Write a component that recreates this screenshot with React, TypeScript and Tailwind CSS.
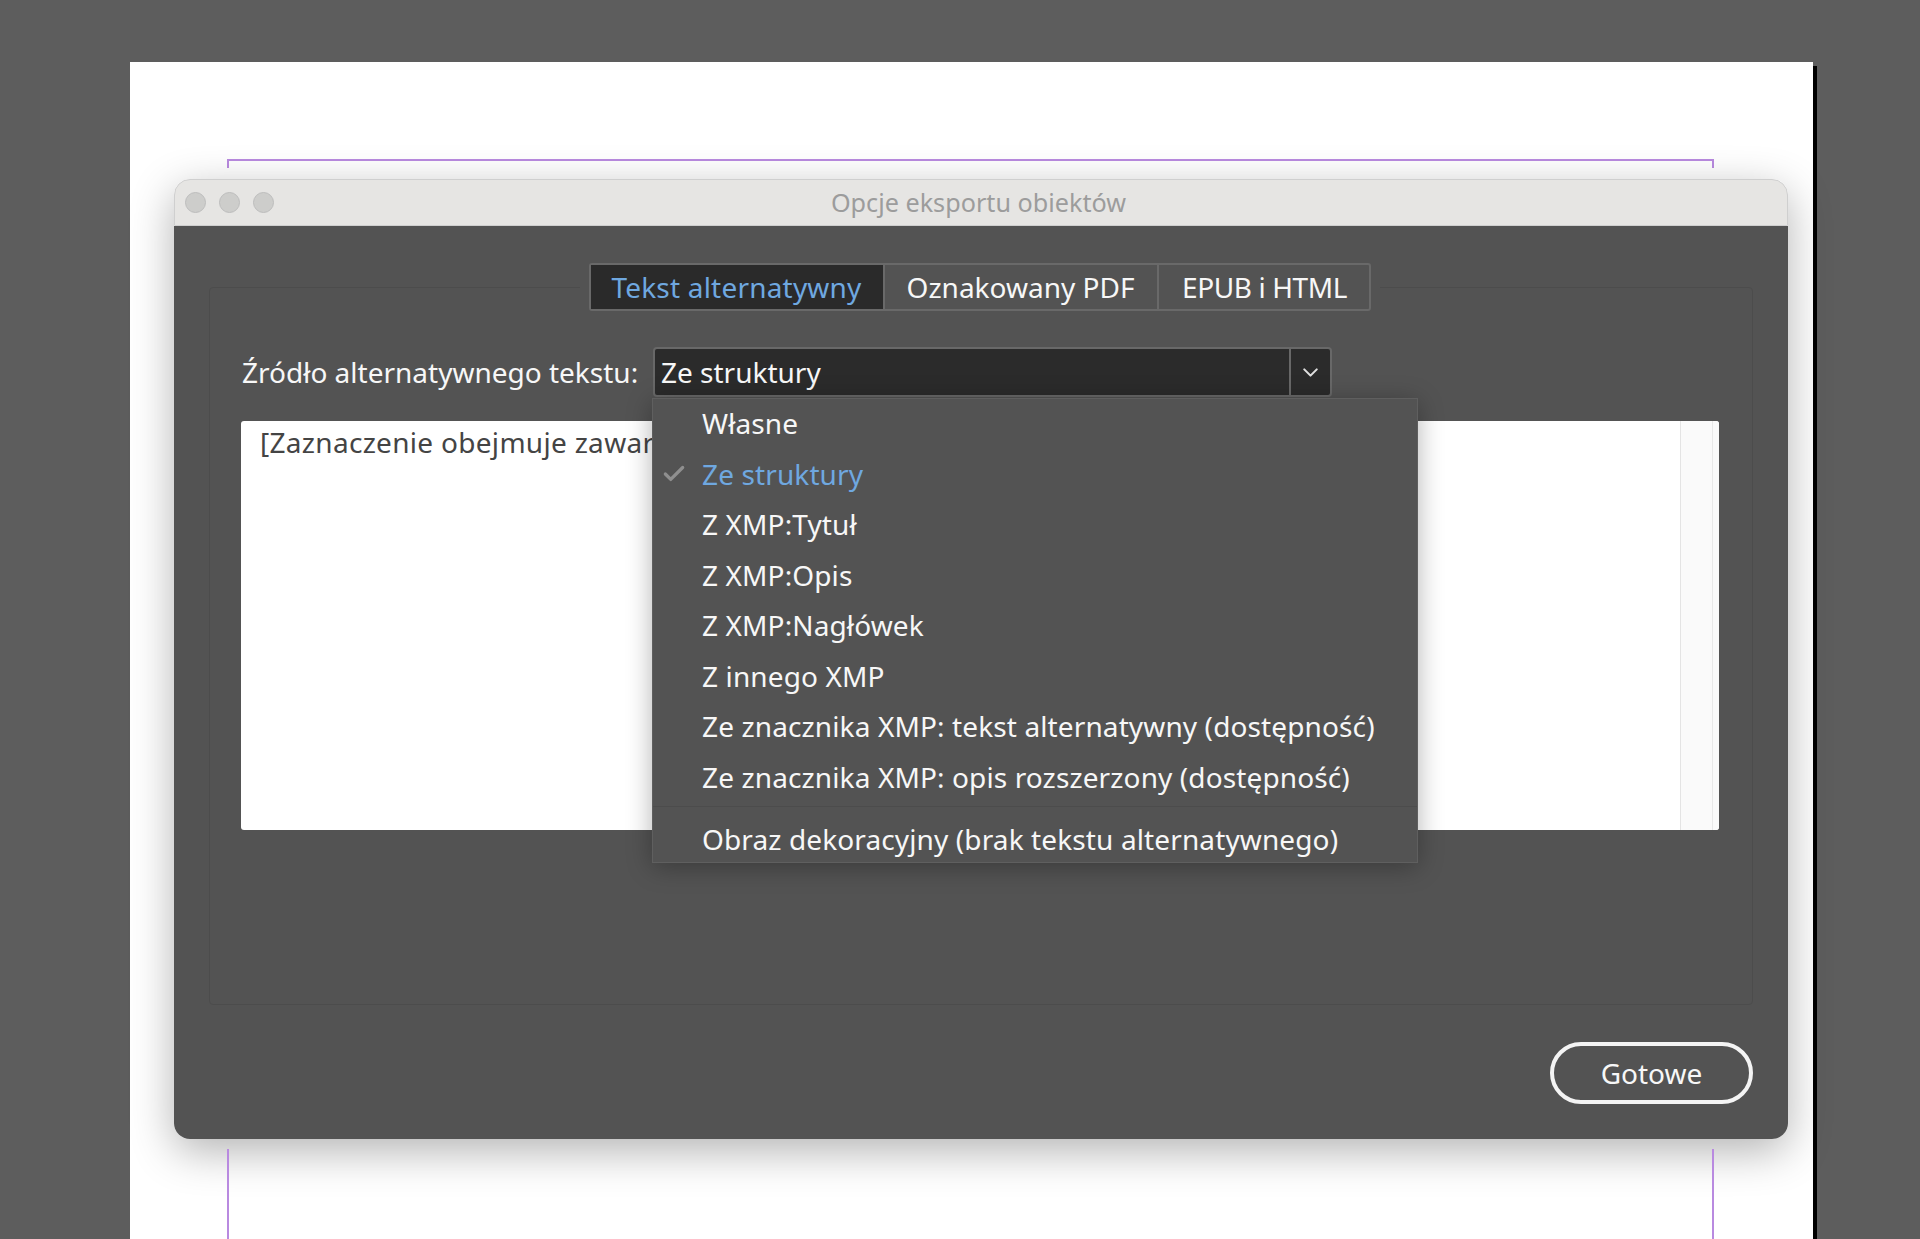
import { Check, ChevronDown } from "lucide-react";

const MENU_ITEMS = [
  "Własne",
  "Ze struktury",
  "Z XMP:Tytuł",
  "Z XMP:Opis",
  "Z XMP:Nagłówek",
  "Z innego XMP",
  "Ze znacznika XMP: tekst alternatywny (dostępność)",
  "Ze znacznika XMP: opis rozszerzony (dostępność)",
];

export default function App() {
  return (
    <div className="flex h-[1239px] overflow-hidden bg-[#5d5d5d] pt-[62px] pl-[130px] font-['Noto_Sans',sans-serif] text-[28px] text-[#f7f7f7]">
      {/* Document page */}
      <div className="flex w-[1683px] flex-col bg-white pt-[97px]">
        <div className="ml-[97px] h-[9px] w-[1487px] border-x-2 border-t-2 border-[#b98ae0]" />

        {/* Dialog */}
        <div className="mt-[11px] ml-[44px] flex h-[960px] w-[1614px] flex-col rounded-[16px] shadow-[0_12px_44px_rgba(0,0,0,0.3)]">
          <div className="flex h-[47px] items-center rounded-t-[16px] border-x border-t border-b border-[#cfcfcf] bg-[#e6e5e3] pl-[10px]">
            <div className="flex gap-[13px]">
              <span className="h-[21px] w-[21px] rounded-full border border-[#bdbdbd] bg-[#cdcdcb]" />
              <span className="h-[21px] w-[21px] rounded-full border border-[#bdbdbd] bg-[#cdcdcb]" />
              <span className="h-[21px] w-[21px] rounded-full border border-[#bdbdbd] bg-[#cdcdcb]" />
            </div>
            <span className="flex-1 pr-[104px] text-center text-[25.2px] text-[#9c9c9c]">Opcje eksportu obiektów</span>
          </div>

          <div className="flex flex-1 flex-col rounded-b-[16px] bg-[#535353]">
            <div className="mt-[61px] ml-[35px] flex h-[718px] w-[1544px] flex-col rounded-[4px] border border-[#4c4c4c] pl-[31px]">
              {/* Tabs */}
              <div className="-mt-[25px] mr-[34px] flex self-center bg-[#535353] px-[9px]">
                <div className="flex h-[48px] items-center rounded-[3px] border-2 border-[#696969]">
                  <span className="flex h-full w-[292px] items-center justify-center bg-[#2a2a2a] tracking-[0.2px] text-[#6fa8e0]">Tekst alternatywny</span>
                  <span className="flex h-full w-[274px] items-center justify-center border-l-2 border-[#696969]">Oznakowany PDF</span>
                  <span className="flex h-full w-[212px] items-center justify-center border-l-2 border-[#696969] pl-[2px] tracking-[-0.4px]">EPUB i HTML</span>
                </div>
              </div>

              {/* Source select */}
              <div className="mt-[36px] flex">
                <span className="flex h-[50px] w-[412px] items-center pl-[1px]">Źródło alternatywnego tekstu:</span>
                <div className="relative">
                  <div className="flex h-[50px] w-[679px] rounded-[4px] border-2 border-[#686868] bg-[#2b2b2b]">
                    <span className="flex flex-1 items-center pl-[6px]">Ze struktury</span>
                    <span className="flex w-[41px] items-center justify-center border-l-2 border-[#686868]">
                      <ChevronDown size={25} strokeWidth={2} className="text-[#e0e0e0]" />
                    </span>
                  </div>

                  {/* Open menu */}
                  <div className="absolute top-[51px] -left-[1px] z-10 w-[766px] border border-[#5f5f5f] bg-[#535353] shadow-[0_4px_24px_rgba(0,0,0,0.3)]">
                    {MENU_ITEMS.map((item, i) => (
                      <div key={item} className={`flex h-[50.5px] items-center pb-[2px] tracking-[0.12px] ${i === 1 ? "text-[#6fa8e0]" : ""}`}>
                        <span className="flex w-[49px] justify-center pr-[8px]">
                          {i === 1 && <Check size={26} strokeWidth={3} className="text-[#8f8f8f]" />}
                        </span>
                        <span>{item}</span>
                      </div>
                    ))}
                    <div className="mt-[3px] border-t border-[#4c4c4c]" />
                    <div className="flex h-[55px] items-center pt-[9px] pl-[49px] tracking-[0.12px]">Obraz dekoracyjny (brak tekstu alternatywnego)</div>
                  </div>
                </div>
              </div>

              {/* Alt text box */}
              <div className="mt-[24px] flex h-[409px] w-[1478px] rounded-[3px] bg-white text-[#444444]">
                <span className="flex-1 pl-[19px] tracking-[0.3px]">[Zaznaczenie obejmuje zawar</span>
                <div className="w-[39px] rounded-r-[3px] border-l border-[#e4e4e4] bg-[#fafafa] pr-[6px]">
                  <div className="h-full border-r border-[#e8e8e8]" />
                </div>
              </div>
            </div>

            <div className="mt-[37px] flex justify-end pr-[35px]">
              <button className="h-[62px] w-[203px] rounded-full border-[4px] border-[#f4f4f4]">Gotowe</button>
            </div>
          </div>
        </div>

        <div className="mt-[10px] ml-[97px] w-[1487px] flex-1 border-x-2 border-[#b98ae0]" />
      </div>
      <div className="mt-[4px] w-[4px] bg-black" />
    </div>
  );
}
